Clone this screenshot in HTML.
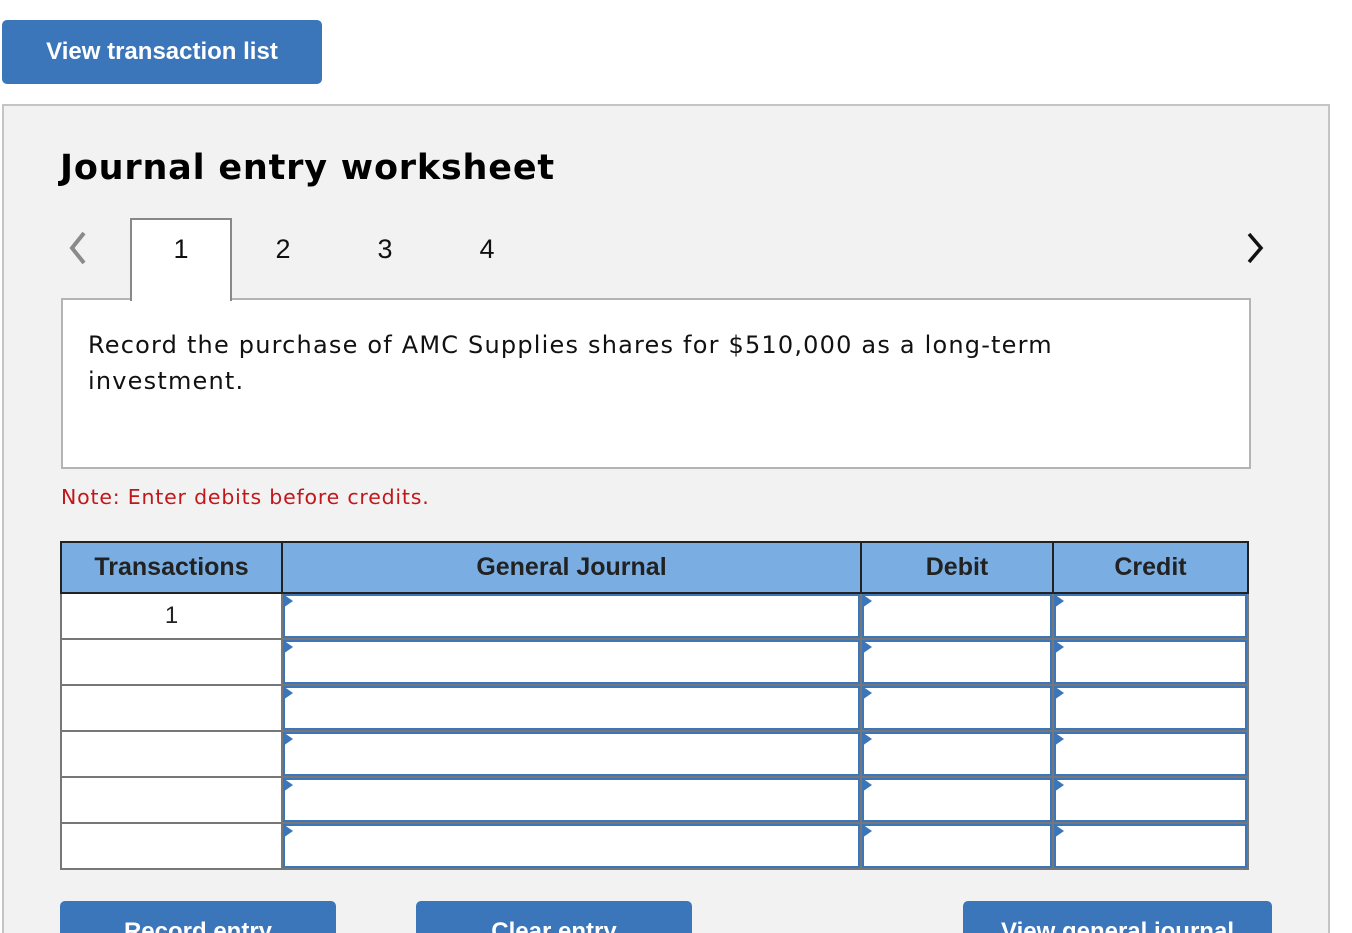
<!DOCTYPE html>
<html><head><style>
*{box-sizing:border-box;margin:0;padding:0}
html,body{width:1352px;height:933px;overflow:hidden}
body{background:#fff;font-family:"Liberation Sans",Arial,sans-serif;position:relative}
.btn{position:absolute;background:#3a76b9;color:#fff;font-weight:bold;font-size:24px;border-radius:5px;text-align:center}
#panel{position:absolute;left:2px;top:104px;width:1328px;height:840px;background:#f2f2f2;border:2px solid #c4c4c4}
.abs{position:absolute}
h1{position:absolute;left:60px;top:148px;font-family:"DejaVu Sans",Verdana,sans-serif;font-weight:bold;font-size:35px;letter-spacing:0.8px;color:#000}
.tab{position:absolute;top:234px;font-size:27px;color:#111;width:40px;text-align:center}
table{position:absolute;left:60px;top:541px;border-collapse:collapse}
th{background:#7aaee3;border:2px solid #222;height:51px;font-size:25px;color:#222}
td{border:2px solid #777;height:46px;background:#fff;position:relative;font-size:24px;text-align:center;color:#222}
td.in{padding:0}
td.in div{position:absolute;left:0px;top:0px;right:0px;bottom:0px;border:2px solid #3a76b9;background:#fff}
td.in div:before{content:"";position:absolute;left:-2px;top:-2px;border-left:10px solid #3a76b9;border-top:7px solid transparent;border-bottom:7px solid transparent}
</style></head><body>
<div class="btn" style="left:2px;top:20px;width:320px;height:64px;line-height:64px">View transaction list</div>
<div id="panel"></div>
<h1>Journal entry worksheet</h1>
<svg class="abs" style="left:64px;top:230px" width="26" height="36"><path d="M20 3 L8 18 L20 33" stroke="#8a8a8a" stroke-width="4" fill="none"/></svg>
<svg class="abs" style="left:1243px;top:230px" width="26" height="36"><path d="M6 4 L18 18 L6 32" stroke="#111" stroke-width="3.5" fill="none"/></svg>
<div class="abs" style="left:61px;top:298px;width:1190px;height:171px;background:#fff;border:2px solid #b4b4b4"></div>
<div class="abs" style="left:130px;top:218px;width:102px;height:83px;background:#fff;border:2px solid #888;border-bottom:none"></div>
<div class="tab" style="left:161px">1</div>
<div class="tab" style="left:263px">2</div>
<div class="tab" style="left:365px">3</div>
<div class="tab" style="left:467px">4</div>
<div class="abs" style="left:88px;top:327px;width:1100px;font-family:'DejaVu Sans',Verdana,sans-serif;font-size:24px;letter-spacing:1.2px;line-height:36px;color:#111">Record the purchase of AMC Supplies shares for $510,000 as a long-term<br>investment.</div>
<div class="abs" style="left:61px;top:485px;font-family:'DejaVu Sans',Verdana,sans-serif;font-size:20.5px;letter-spacing:0.8px;color:#c0171b">Note: Enter debits before credits.</div>
<table>
<tr><th style="width:221px">Transactions</th><th style="width:579px">General Journal</th><th style="width:192px">Debit</th><th style="width:195px">Credit</th></tr>
<tr><td>1</td><td class="in"><div></div></td><td class="in"><div></div></td><td class="in"><div></div></td></tr>
<tr><td></td><td class="in"><div></div></td><td class="in"><div></div></td><td class="in"><div></div></td></tr>
<tr><td></td><td class="in"><div></div></td><td class="in"><div></div></td><td class="in"><div></div></td></tr>
<tr><td></td><td class="in"><div></div></td><td class="in"><div></div></td><td class="in"><div></div></td></tr>
<tr><td></td><td class="in"><div></div></td><td class="in"><div></div></td><td class="in"><div></div></td></tr>
<tr><td></td><td class="in"><div></div></td><td class="in"><div></div></td><td class="in"><div></div></td></tr>
</table>
<div class="btn" style="left:60px;top:901px;width:276px;height:64px;padding-top:17px">Record entry</div>
<div class="btn" style="left:416px;top:901px;width:276px;height:64px;padding-top:17px">Clear entry</div>
<div class="btn" style="left:963px;top:901px;width:309px;height:64px;padding-top:17px">View general journal</div>
</body></html>
